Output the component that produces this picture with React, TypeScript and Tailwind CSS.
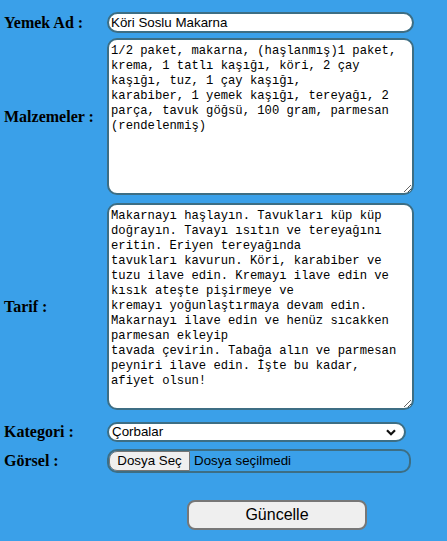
const INGREDIENTS = [
  "1/2 paket, makarna, (haşlanmış)1 paket,",
  "krema, 1 tatlı kaşığı, köri, 2 çay",
  "kaşığı, tuz, 1 çay kaşığı,",
  "karabiber, 1 yemek kaşığı, tereyağı, 2",
  "parça, tavuk göğsü, 100 gram, parmesan",
  "(rendelenmiş)",
].join("\n");

const RECIPE = [
  "Makarnayı haşlayın. Tavukları küp küp",
  "doğrayın. Tavayı ısıtın ve tereyağını",
  "eritin. Eriyen tereyağında",
  "tavukları kavurun. Köri, karabiber ve",
  "tuzu ilave edin. Kremayı ilave edin ve",
  "kısık ateşte pişirmeye ve",
  "kremayı yoğunlaştırmaya devam edin.",
  "Makarnayı ilave edin ve henüz sıcakken",
  "parmesan ekleyip",
  "tavada çevirin. Tabağa alın ve parmesan",
  "peyniri ilave edin. İşte bu kadar,",
  "afiyet olsun!",
].join("\n");

const label =
  "w-[107px] shrink-0 pl-[4px] font-['Liberation_Serif',serif] text-[16px] font-bold leading-none text-black";
const sans = "font-['Liberation_Sans',Arial,sans-serif] text-[13.33px] leading-none text-black";
const area =
  "h-full w-[307px] rounded-[10px] border-2 border-[#3d6e84] bg-white px-[2px] pt-[4px] font-['Liberation_Mono',monospace] text-[12.2px] leading-[15px] text-black outline-none";

export default function App() {
  return (
    <div className="min-h-[541px] w-[447px] bg-[#3aa0e9] pt-[12px]">
      <div className="flex h-[21px] items-center">
        <span className={label}>Yemek Ad :</span>
        <div className={`flex h-full w-[307px] items-center rounded-full border-2 border-[#3d6e84] bg-white pl-[2px] ${sans}`}>
          Köri Soslu Makarna
        </div>
      </div>

      <div className="mt-[5px] flex h-[157px] items-center">
        <span className={label}>Malzemeler :</span>
        <textarea readOnly value={INGREDIENTS} className={area} />
      </div>

      <div className="mt-[8px] flex h-[207px] items-center">
        <span className={label}>Tarif :</span>
        <textarea readOnly value={RECIPE} className={area} />
      </div>

      <div className="mt-[12px] flex h-[20px] items-center">
        <span className={label}>Kategori :</span>
        <div className={`flex h-full w-[299px] items-center justify-between rounded-full border-2 border-[#3d6e84] bg-white pl-[3px] pr-[8px] ${sans}`}>
          <span>Çorbalar</span>
          <svg width="10" height="7" viewBox="0 0 10 7" aria-hidden>
            <path d="M1 1.2 5 5.2 9 1.2" fill="none" stroke="#111" strokeWidth="2.2" />
          </svg>
        </div>
      </div>

      <div className="mt-[7px] flex h-[24px] items-center">
        <span className={label}>Görsel :</span>
        <div className={`flex h-full w-[304px] items-center rounded-[10px] border-2 border-[#3d6e84] ${sans}`}>
          <span className="flex h-full w-[81px] items-center justify-center rounded-l-[8px] border border-[#767676] bg-[#efefef]">
            Dosya Seç
          </span>
          <span className="ml-[4px]">Dosya seçilmedi</span>
        </div>
      </div>

      <div className="mt-[27px] flex pl-[187px]">
        <button
          type="button"
          className="h-[30px] w-[180px] rounded-[8px] border-2 border-[#777] bg-[#efefef] font-['Liberation_Sans',Arial,sans-serif] text-[16px] text-black"
        >
          Güncelle
        </button>
      </div>
    </div>
  );
}
